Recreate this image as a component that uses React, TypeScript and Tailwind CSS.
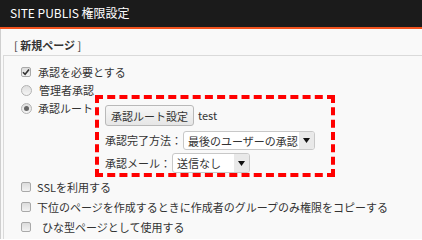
import React from "react";

const font = { fontFamily: '"Noto Sans CJK JP", "Noto Sans", sans-serif' };

function Check({ checked = false }: { checked?: boolean }) {
  return (
    <span className="flex h-[10px] w-[10px] shrink-0 items-center justify-center rounded-[2px] border border-[#a9a9a9] bg-gradient-to-b from-[#dcdcdc] to-[#f3f3f3]">
      {checked && (
        <svg width="8" height="8" viewBox="0 0 8 8">
          <path d="M1 4.2 L3.1 6.3 L7 1.5" fill="none" stroke="#333" strokeWidth="1.6" />
        </svg>
      )}
    </span>
  );
}

function Radio({ checked = false }: { checked?: boolean }) {
  return (
    <span className="flex h-[11px] w-[11px] shrink-0 items-center justify-center rounded-full border border-[#b3b3b3] bg-gradient-to-b from-[#dedede] to-[#f5f5f5]">
      {checked && <span className="h-[5px] w-[5px] rounded-full bg-[#666]" />}
    </span>
  );
}

function Select({ value, width }: { value: string; width: string }) {
  return (
    <div className={`flex h-full ${width} items-stretch overflow-hidden rounded-[3px] border border-[#c8c8c8] bg-white`}>
      <span className="flex-1 whitespace-nowrap pl-[4px] leading-[18px] text-[#333]">{value}</span>
      <span className="flex w-[15px] items-center justify-center bg-[#e9e9e9]">
        <svg width="7" height="5" viewBox="0 0 7 5">
          <path d="M0 0 H7 L3.5 5 Z" fill="#111" />
        </svg>
      </span>
    </div>
  );
}

export default function App() {
  return (
    <div className="h-[239px] w-[422px] overflow-hidden bg-[#f9f9f9] text-[11px] text-[#333]" style={font}>
      <header className="flex h-[29px] items-center border-b-[2px] border-[#f2531f] bg-[#1b1b1b] pl-[10px] pb-[1px] text-[12px] text-white">
        SITE PUBLIS 権限設定
      </header>
      <div className="h-[210px] border-l border-[#cfcfcf]">
        <div className="pl-[13px] pt-[8px] pb-[2px] leading-[16px]">
          [ <span className="font-bold">新規ページ</span> ]
        </div>
        <div className="ml-[2px] h-full border-l border-t border-[#dadada] pl-[17px] pt-[7px]">
          <div className="flex h-[18px] items-center gap-[7px]">
            <Check checked />
            <span>承認を必要とする</span>
          </div>
          <div className="flex h-[18px] items-center gap-[7px]">
            <Radio />
            <span>管理者承認</span>
          </div>
          <div className="-mt-[4px] flex items-start">
            <div className="flex w-[74px] shrink-0 items-center gap-[6px] pt-[4px] leading-[18px]">
              <Radio checked />
              <span>承認ルート</span>
            </div>
            <div className="w-[240px] border-[4px] border-dashed border-[#ff0000] pl-[6px] pt-[6px]">
              <div className="flex h-[21px] items-center gap-[4px]">
                <button className="h-full rounded-[3px] border border-[#b9b9b9] bg-gradient-to-b from-[#f7f7f7] to-[#e6e6e6] px-[5px] leading-[18px] text-[#333]">
                  承認ルート設定
                </button>
                <span>test</span>
              </div>
              <div className="mt-[5px] flex h-[19px] items-center gap-[1px]">
                <span className="whitespace-nowrap">承認完了方法：</span>
                <Select value="最後のユーザーの承認" width="w-[132px]" />
              </div>
              <div className="mt-[3px] flex h-[20px] items-center gap-[1px]">
                <span className="whitespace-nowrap">承認メール：</span>
                <Select value="送信なし" width="w-[78px]" />
              </div>
            </div>
          </div>
          <div className="flex h-[20px] items-center gap-[6px]">
            <Check />
            <span>SSLを利用する</span>
          </div>
          <div className="flex h-[20px] items-center gap-[6px]">
            <Check />
            <span className="whitespace-nowrap">下位のページを作成するときに作成者のグループのみ権限をコピーする</span>
          </div>
          <div className="flex h-[20px] items-center gap-[6px]">
            <Check />
            <span className="pl-[5px]">ひな型ページとして使用する</span>
          </div>
        </div>
      </div>
    </div>
  );
}
